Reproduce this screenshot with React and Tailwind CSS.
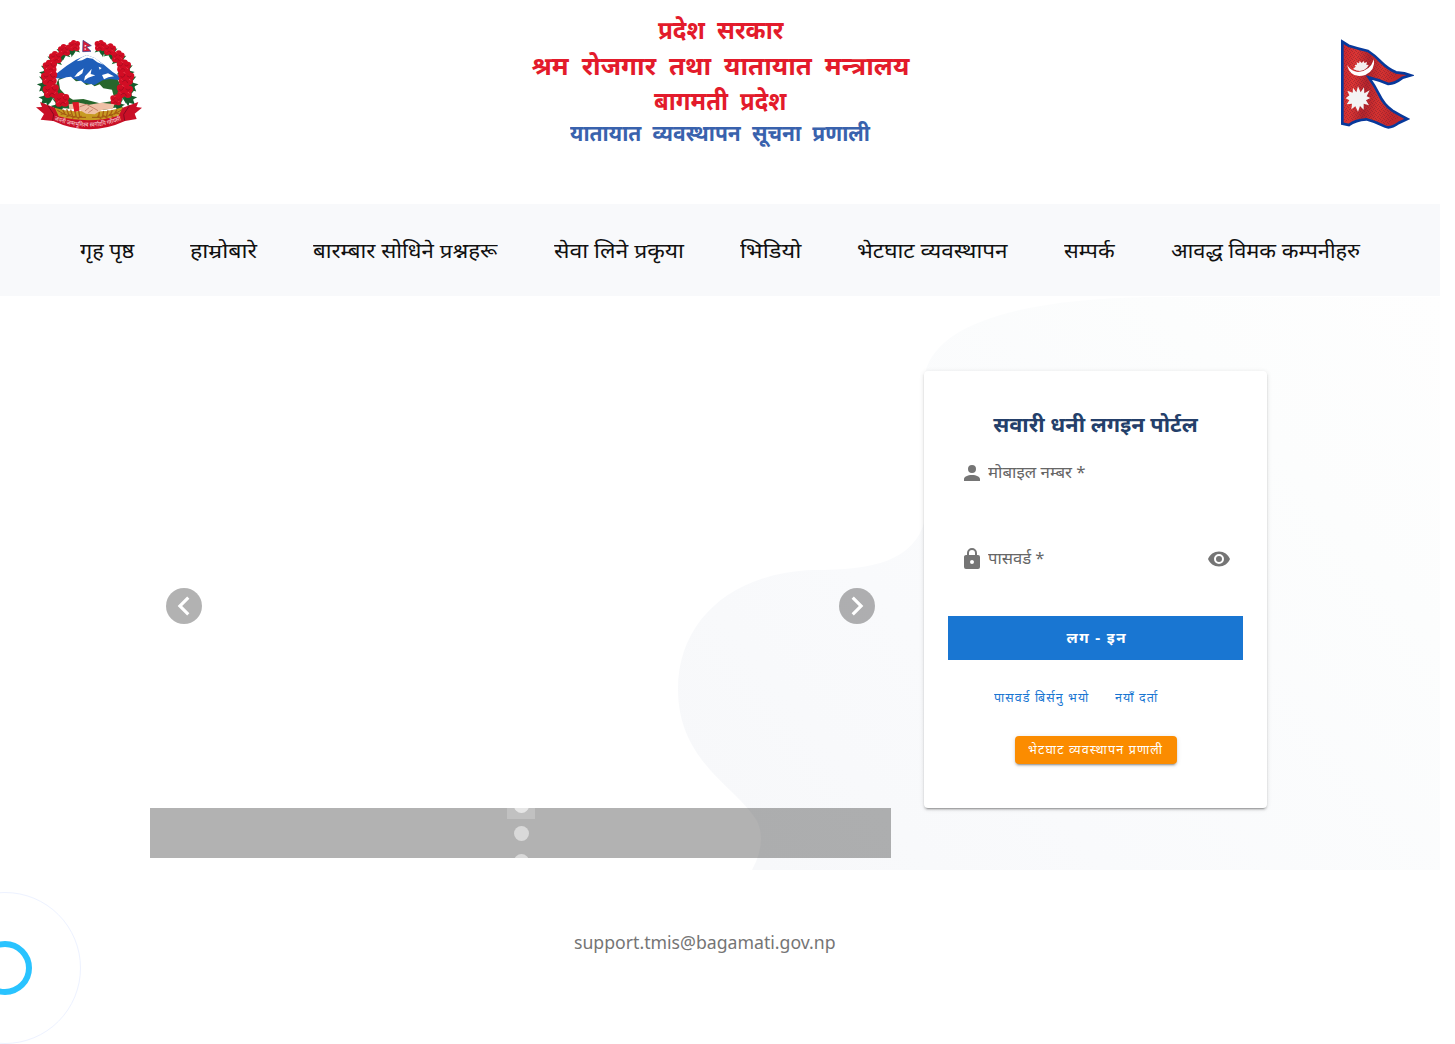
import React from "react";

const NAV = [
  { label: "गृह पृष्ठ", box: "w-[54px]", fit: "scale-x-[1.08]" },
  { label: "हाम्रोबारे", box: "w-[67px]", fit: "scale-x-[1.16]" },
  { label: "बारम्बार सोधिने प्रश्नहरू", box: "w-[185px]", fit: "scale-x-[1.114]" },
  { label: "सेवा लिने प्रकृया", box: "w-[130px]", fit: "scale-x-[1.145]" },
  { label: "भिडियो", box: "w-[61px]", fit: "scale-x-[1.18]" },
  { label: "भेटघाट व्यवस्थापन", box: "w-[151px]", fit: "scale-x-[1.125]" },
  { label: "सम्पर्क", box: "w-[51px]", fit: "scale-x-[1.085]" },
  { label: "आवद्ध विमक कम्पनीहरु", box: "w-[189px]", fit: "scale-x-[1.09]" },
];

const FLOWERS = [
  [163, 62, 18], [133, 75, 19], [107, 97, 20], [90, 125, 22], [88, 158, 25], [93, 197, 25], [126, 225, 23],
  [241, 62, 18], [269, 73, 19], [294, 95, 20], [311, 124, 22], [318, 158, 25], [314, 197, 25], [288, 225, 18],
];

function Flower({ x, y, r }) {
  const side = x < 200 ? -1 : 1;
  return (
    <g transform={`translate(${x} ${y}) scale(${(side * r) / 18} ${r / 18})`}>
      <path d="M-6 4L20 -10L16 2L25 13L10 12L13 26L2 17L-9 25L-6 12Z" fill="#176b32" transform="rotate(20)" />
      <path d="M3 8L27 14L18 19L22 30L10 26L8 35L0 20Z" fill="#145c2c" />
      <g fill="#d20d24">
        <circle cx="-9" cy="-6" r="8" />
        <circle cx="2" cy="-9" r="8" />
        <circle cx="10" cy="-3" r="8" />
        <circle cx="7" cy="8" r="8" />
        <circle cx="-7" cy="7" r="9" />
        <circle r="9" />
      </g>
      <path d="M-12 -3Q-5 3 -2 -8M2 -4Q8 2 12 -4M-8 9Q0 1 4 12" fill="none" stroke="#a50c20" strokeWidth="2" />
      <path d="M-5 -12L-2 -9M7 3L10 6M-10 4L-8 6" stroke="#f2505c" strokeWidth="2" />
    </g>
  );
}

function Emblem() {
  return (
    <svg className="block h-[92px] w-[107px]" viewBox="48 42 321 276" aria-hidden="true">
      <path d="M103 205Q110 162 120 158L290 160Q318 200 300 245L250 255L130 250Z" fill="#28662c" />
      <path d="M107 148L140 122L168 104L200 90L224 99L252 119L278 141L302 157L302 166L270 162L248 166L224 180L190 173L165 162L108 160Z" fill="#1f5eb9" />
      <path d="M183 98L200 90L226 100L250 119L232 112L218 101L201 98L186 106L170 109ZM173 143L191 130L187 145L176 153L163 156ZM209 139L215 131L212 147L226 151L205 158L192 167L195 154ZM236 125L245 129L239 134ZM246 150L264 145L282 154L265 157L252 163Z" fill="#fff" />
      <path d="M116 165L139 157L153 155L168 169L183 167L199 180L214 177L224 184L239 178L250 190L276 194L281 213L273 229L239 235L190 222L159 224L139 212L120 192Z" fill="#fff" />
      <path d="M189 46L214 62L200 66L213 79L188 80Z" fill="#d51d38" stroke="#283f93" strokeWidth="2" />
      <path d="M194 59L200 62L194 66M194 69L199 72L194 76" fill="#fff" />
      {FLOWERS.map(([x, y, r]) => <Flower key={`${x}-${y}`} x={x} y={y} r={r} />)}
      <path d="M104 248Q160 265 208 255Q258 265 309 246L301 285Q207 307 112 286Z" fill="#c79b23" />
      <path d="M112 256Q148 281 198 277M306 254Q266 281 216 277" fill="none" stroke="#9b5715" strokeWidth="3" />
      <path d="M128 254l7 13m5-14l7 18m5-17l6 21m6-20l5 21m7-19l3 18M291 254l-8 14m-6-13l-7 17m-6-16l-5 20m-8-18l-4 19m-9-16l-2 15M122 268l14-4m3 12l14-7m3 11l13-8m4 9l12-8M298 266l-14-3m-4 12l-13-7m-4 12l-13-8m-6 9l-12-8" fill="none" stroke="#a95c12" strokeWidth="4" />
      <path d="M146 238L178 233L207 239L244 233L283 238L279 251L246 255L224 268L198 266L174 252L148 252Z" fill="#efc0a6" />
      <path d="M178 246L199 238L222 250L234 257M195 258L207 248M205 263L218 254" fill="none" stroke="#bd765e" strokeWidth="2.5" />
      <path d="M157 232L176 231L178 257L163 260Z" fill="#dc1726" />
      <path d="M48 247L66 246L60 231L104 248L116 274Q208 298 296 272L308 248L355 231L349 246L366 248L344 266L350 282L315 288Q207 338 100 288L62 284L72 267Z" fill="#c90f26" />
      <path d="M84 242L101 268L98 287M329 241L311 268L314 287" fill="none" stroke="#870a20" strokeWidth="3" />
      <path id="motto-line" d="M103 285Q207 327 311 283" fill="none" />
      <text fontSize="19" fill="#f7c9cd" fontFamily="Noto Sans, sans-serif" fontWeight="500" textLength="206" lengthAdjust="spacingAndGlyphs">
        <textPath href="#motto-line">जननी जन्मभूमिश्च स्वर्गादपि गरीयसी</textPath>
      </text>
    </svg>
  );
}

function Flag() {
  return (
    <svg className="block h-[91px] w-[74px]" viewBox="45 42 222 273" aria-hidden="true">
      <defs>
        <linearGradient id="cloth" x1="0" x2="1" y1="0" y2=".15">
          <stop offset="0" stopColor="#c9252c" />
          <stop offset=".22" stopColor="#dc3634" />
          <stop offset=".42" stopColor="#b2242c" />
          <stop offset=".62" stopColor="#d43230" />
          <stop offset=".85" stopColor="#bf272c" />
        </linearGradient>
        <pattern id="weave" width="12" height="12" patternUnits="userSpaceOnUse">
          <path d="M0 0h3v3H0zM6 3h3v3H6zM3 9h3v3H3zM9 6h3v3H9z" fill="#6e1c30" opacity=".4" />
        </pattern>
      </defs>
      <path d="M52 50L71 62Q103 72 129 78Q151 92 168 111Q189 132 213 142L238 145L257 151L233 158Q210 176 190 177Q163 165 131 157Q150 184 162 208Q176 238 202 257Q222 269 247 282L221 294Q196 312 181 305Q151 290 124 283Q91 285 72 300L52 296Z" fill="url(#cloth)" stroke="#07399b" strokeWidth="8" />
      <path d="M56 59L128 82L178 126L218 148L190 171L120 154L162 220L220 277L187 301L120 278L57 290Z" fill="url(#weave)" />
      <path d="M66 120Q78 139 99 141Q135 139 147 103Q151 137 121 150Q77 163 66 120Z" fill="#fff" />
      <path d="M84 132L92 125L89 120L96 119L95 112L102 115L104 108L110 114L116 108L118 114L126 111L124 119L131 120L126 128Q110 145 84 132Z" fill="#f4eeee" />
      <path d="M99 184L107 202L117 187L118 205L134 196L125 214L136 219L123 226L132 241L116 236L116 254L105 243L99 260L91 244L79 253L81 236L65 238L73 226L62 220L73 211L67 197L83 203L84 188L94 202Z" fill="#f4f4f4" />
    </svg>
  );
}

function Blob() {
  return (
    <svg className="absolute inset-0 -z-10 h-[574px] w-[1440px]" viewBox="0 296 1440 574" aria-hidden="true">
      <defs>
        <linearGradient id="wash" gradientUnits="userSpaceOnUse" x1="760" y1="870" x2="1446" y2="300">
          <stop stopColor="#f7f8fa" />
          <stop offset=".3" stopColor="#f9fafc" />
          <stop offset=".75" stopColor="#fcfdfd" />
          <stop offset="1" stopColor="#fefefe" />
        </linearGradient>
      </defs>
      <path d="M1440 297H1150C1030 299 938 320 925 373V520C914 561 874 570 813 570C730 573 678 622 678 689C678 762 736 786 757 821Q767 842 752 870H1440Z" fill="url(#wash)" />
    </svg>
  );
}

function Arrow({ d }) {
  return (
    <button className="flex h-9 w-9 items-center justify-center rounded-full bg-black/30">
      <svg className="h-[38px] w-[38px] shrink-0" viewBox="0 0 24 24" fill="#fff"><path d={d} /></svg>
    </button>
  );
}

function Icon({ d }) {
  return <svg className="h-6 w-6 shrink-0" viewBox="0 0 24 24" fill="#757575"><path d={d} /></svg>;
}

export default function App() {
  return (
    <div className="h-[1044px] w-full overflow-hidden bg-white font-['Noto_Sans','Open_Sans',sans-serif]">
      <div className="w-[1440px]">
        <header className="flex h-[204px] items-start pr-[26px] pl-9">
          <div className="w-[200px] pt-[39px]"><Emblem /></div>
          <div className="flex grow flex-col items-center pt-[11px] pr-[135px] font-bold whitespace-nowrap text-[#e31b2b]">
            <p className="h-9 scale-x-[.97] text-[25px] leading-9 [word-spacing:6px]">प्रदेश सरकार</p>
            <p className="h-[35px] scale-x-[1.036] text-[25px] leading-9 [word-spacing:6px]">श्रम रोजगार तथा यातायात मन्त्रालय</p>
            <p className="h-[34px] scale-x-[.957] text-[25px] leading-9 [word-spacing:6px]">बागमती प्रदेश</p>
            <p className="h-8 scale-x-[.955] text-[22px] leading-8 text-[#3962ad] [word-spacing:6px]">यातायात व्यवस्थापन सूचना प्रणाली</p>
          </div>
          <div className="pt-[39px]"><Flag /></div>
        </header>

        <nav className="flex h-[92px] items-center gap-[56px] bg-[#f8f9fb] pt-0.5 pl-20 text-[20px] text-[#111]">
          {NAV.map((n) => (
            <a key={n.label} className={`${n.box} shrink-0 whitespace-nowrap`}>
              <span className={`inline-block origin-left ${n.fit}`}>{n.label}</span>
            </a>
          ))}
        </nav>

        <main className="relative isolate flex h-[574px] items-start pl-[150px]">
          <Blob />
          <section className="mt-[62px] flex h-[500px] w-[741px] flex-col">
            <div className="flex h-[450px] items-end justify-between px-4 pb-[184px]">
              <Arrow d="M15.41 16.58L10.83 12L15.41 7.41L14 6L8 12L14 18L15.41 16.58Z" />
              <Arrow d="M8.59 16.58L13.17 12L8.59 7.41L10 6L16 12L10 18L8.59 16.58Z" />
            </div>
            <div className="flex h-[50px] flex-col items-center overflow-hidden bg-black/30">
              <div className="-mt-[17px] flex h-7 w-7 shrink-0 items-center justify-center bg-white/20 pl-px"><i className="h-[15px] w-[15px] rounded-full bg-white/60" /></div>
              <div className="flex h-7 w-7 shrink-0 items-center justify-center pl-px"><i className="h-[15px] w-[15px] rounded-full bg-white/50" /></div>
              <div className="flex h-7 w-7 shrink-0 items-center justify-center pl-px"><i className="h-[15px] w-[15px] rounded-full bg-white/50" /></div>
            </div>
          </section>

          <section className="mt-[75px] ml-[33px] flex h-[437px] w-[343px] flex-col rounded bg-white px-6 shadow-[0_3px_1px_-2px_rgba(0,0,0,.2),0_2px_2px_rgba(0,0,0,.14),0_1px_5px_rgba(0,0,0,.12)]">
            <h1 className="mt-[38px] h-8 scale-x-[1.085] text-center text-[20px] leading-8 font-bold text-[#243f6a]">सवारी धनी लगइन पोर्टल</h1>
            <label className="mt-5 flex h-6 items-center gap-1 pl-3 text-[16px] text-[#666]">
              <Icon d="M12 4A4 4 0 0 1 16 8A4 4 0 0 1 12 12A4 4 0 0 1 8 8A4 4 0 0 1 12 4M12 14C16.42 14 20 15.79 20 18V20H4V18C4 15.79 7.58 14 12 14Z" />
              <span className="origin-left scale-x-[1.054] pb-0.5">मोबाइल नम्बर *</span>
            </label>
            <label className="mt-[62px] flex h-6 items-center gap-1 px-3 text-[16px] text-[#666]">
              <Icon d="M12 17A2 2 0 0 0 14 15C14 13.89 13.1 13 12 13A2 2 0 0 0 10 15A2 2 0 0 0 12 17M18 8A2 2 0 0 1 20 10V20A2 2 0 0 1 18 22H6A2 2 0 0 1 4 20V10C4 8.89 4.9 8 6 8H7V6A5 5 0 0 1 12 1A5 5 0 0 1 17 6V8H18M12 3A3 3 0 0 0 9 6V8H15V6A3 3 0 0 0 12 3Z" />
              <span className="grow origin-left scale-x-[1.037] pb-0.5">पासवर्ड *</span>
              <Icon d="M12 9A3 3 0 0 0 9 12A3 3 0 0 0 12 15A3 3 0 0 0 15 12A3 3 0 0 0 12 9M12 17A5 5 0 0 1 7 12A5 5 0 0 1 12 7A5 5 0 0 1 17 12A5 5 0 0 1 12 17M12 4.5C7 4.5 2.73 7.61 1 12C2.73 16.39 7 19.5 12 19.5C17 19.5 21.27 16.39 23 12C21.27 7.61 17 4.5 12 4.5Z" />
            </label>
            <button className="mt-[45px] h-11 w-full shrink-0 bg-[#1976d2] pb-0.5 pl-0.5 text-[14px] font-bold text-white">
              <span className="inline-block scale-x-[1.09] tracking-[1.25px]">लग - इन</span>
            </button>
            <div className="mt-7 flex h-5 items-center pl-[46px] text-[12px] tracking-[1.07px] whitespace-nowrap text-[#1976d2]">
              <a className="w-[121px]"><span className="inline-block origin-left scale-x-[1.033]">पासवर्ड बिर्सनु भयो</span></a>
              <a><span className="inline-block origin-left scale-x-[1.045]">नयाँ दर्ता</span></a>
            </div>
            <button className="mt-7 ml-[67px] h-7 w-[162px] shrink-0 rounded bg-[#fb8c00] text-[12px] whitespace-nowrap text-white shadow-[0_3px_1px_-2px_rgba(0,0,0,.2),0_2px_2px_rgba(0,0,0,.14),0_1px_5px_rgba(0,0,0,.12)]">
              <span className="inline-block scale-x-[1.045] tracking-[1.07px]">भेटघाट व्यवस्थापन प्रणाली</span>
            </button>
          </section>
        </main>

        <footer className="relative h-[174px] overflow-hidden">
          <p className="pt-[57px] pl-[574px] text-[18px] leading-[30px] text-[#757575]">
            <span className="inline-block origin-left scale-x-[.981]">support.tmis@bagamati.gov.np</span>
          </p>
          <div className="absolute top-[22px] -left-[71px] flex h-[152px] w-[152px] items-center justify-center rounded-full border border-[#edf2ff]">
            <div className="h-[54px] w-[54px] rounded-full border-[6px] border-[#29c3ff]" />
          </div>
        </footer>
      </div>
    </div>
  );
}
